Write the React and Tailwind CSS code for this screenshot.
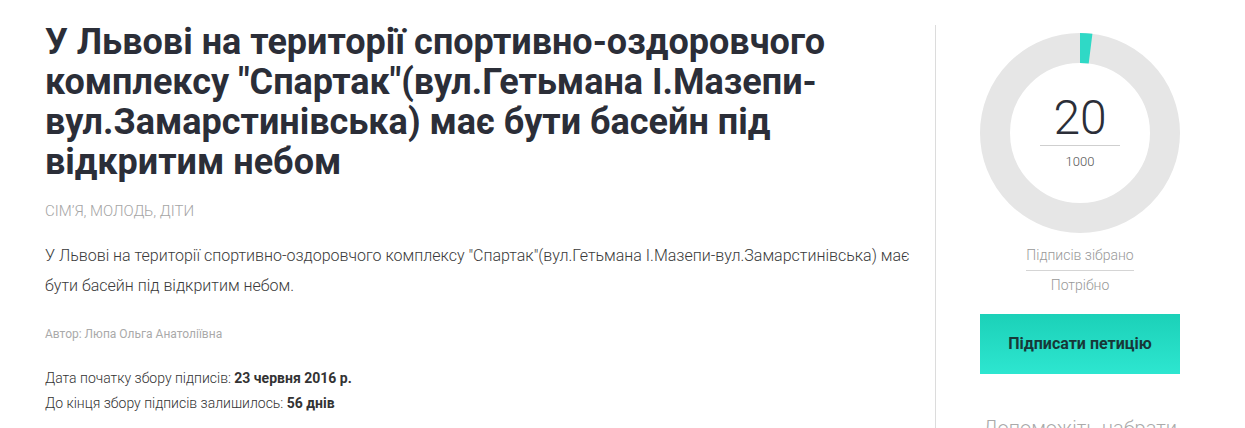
import React from "react";

const Ring = ({ value, total }) => {
    const r = 85;
    const c = 2 * Math.PI * r;
    const part = (value / total) * c;
    return (
        <div className="relative w-[200px] h-[200px] shrink-0">
            <svg width="200" height="200" viewBox="0 0 200 200" className="absolute inset-0">
                <circle cx="100" cy="100" r={r} fill="none" stroke="#e6e6e6" strokeWidth="30" />
                <circle
                    cx="100"
                    cy="100"
                    r={r}
                    fill="none"
                    stroke="#2fd9c6"
                    strokeWidth="30"
                    strokeDasharray={`${part} ${c}`}
                    transform="rotate(-90 100 100)"
                />
            </svg>
            <div className="absolute inset-0 flex flex-col items-center pt-[61px]">
                <div className="text-[48px] font-light leading-none text-[#2b2e38]">{value}</div>
                <div className="w-[80px] h-px bg-[#cfcfcf] mt-[3px]"></div>
                <div className="text-[13px] font-light leading-4 text-[#555] mt-[8px]">{total}</div>
            </div>
        </div>
    );
};

export default function App() {
    return (
        <div className="w-[1245px] h-[428px] overflow-hidden bg-white font-['Roboto',sans-serif] flex">
            {/* Main */}
            <div className="w-[935px] pl-[45px] pr-[25px] pt-[22px]">
                <h1 className="text-[36px] font-bold leading-[40px] text-[#2b2e38]">
                    У Львові на території спортивно-оздоровчого комплексу "Спартак"(вул.Гетьмана І.Мазепи-вул.Замарстинівська) має бути басейн під відкритим небом
                </h1>
                <div className="mt-[18px] text-[15px] leading-[22px] font-light uppercase text-[#a5a5a5]">Сім’я, молодь, діти</div>
                <p className="mt-[19px] text-[16px] font-light leading-[30px] text-[#3a3a3a]">
                    У Львові на території спортивно-оздоровчого комплексу "Спартак"(вул.Гетьмана І.Мазепи-вул.Замарстинівська) має бути басейн під відкритим небом.
                </p>
                <div className="mt-[25px] text-[12px] leading-4 text-[#aaa]">Автор: Люпа Ольга Анатоліївна</div>
                <div className="mt-[24px] text-[14px] font-light leading-[25px] text-[#333]">
                    <div>Дата початку збору підписів: <b className="font-bold">23 червня 2016 р.</b></div>
                    <div>До кінця збору підписів залишилось: <b className="font-bold">56 днів</b></div>
                </div>
            </div>

            {/* Sidebar */}
            <div className="mt-[25px] w-px bg-[#dcdcdc] shrink-0"></div>
            <div className="w-[288px] flex flex-col items-center pt-[33px]">
                <Ring value={20} total={1000} />
                <div className="shrink-0 mt-[12px] text-[14px] leading-5 font-light text-[#999]">Підписів зібрано</div>
                <div className="shrink-0 w-[108px] h-px bg-[#d5d5d5] mt-[5px]"></div>
                <div className="shrink-0 mt-[4px] text-[14px] leading-5 font-light text-[#999]">Потрібно</div>
                <button className="shrink-0 mt-[19px] w-[200px] h-[60px] bg-gradient-to-b from-[#1bd1b8] to-[#2de6d0] text-[16px] font-bold text-[#173838]">
                    Підписати петицію
                </button>
                <div className="shrink-0 mt-[40px] text-[20px] leading-7 font-light text-[#aaa]">Допоможіть набрати</div>
            </div>
        </div>
    );
}
